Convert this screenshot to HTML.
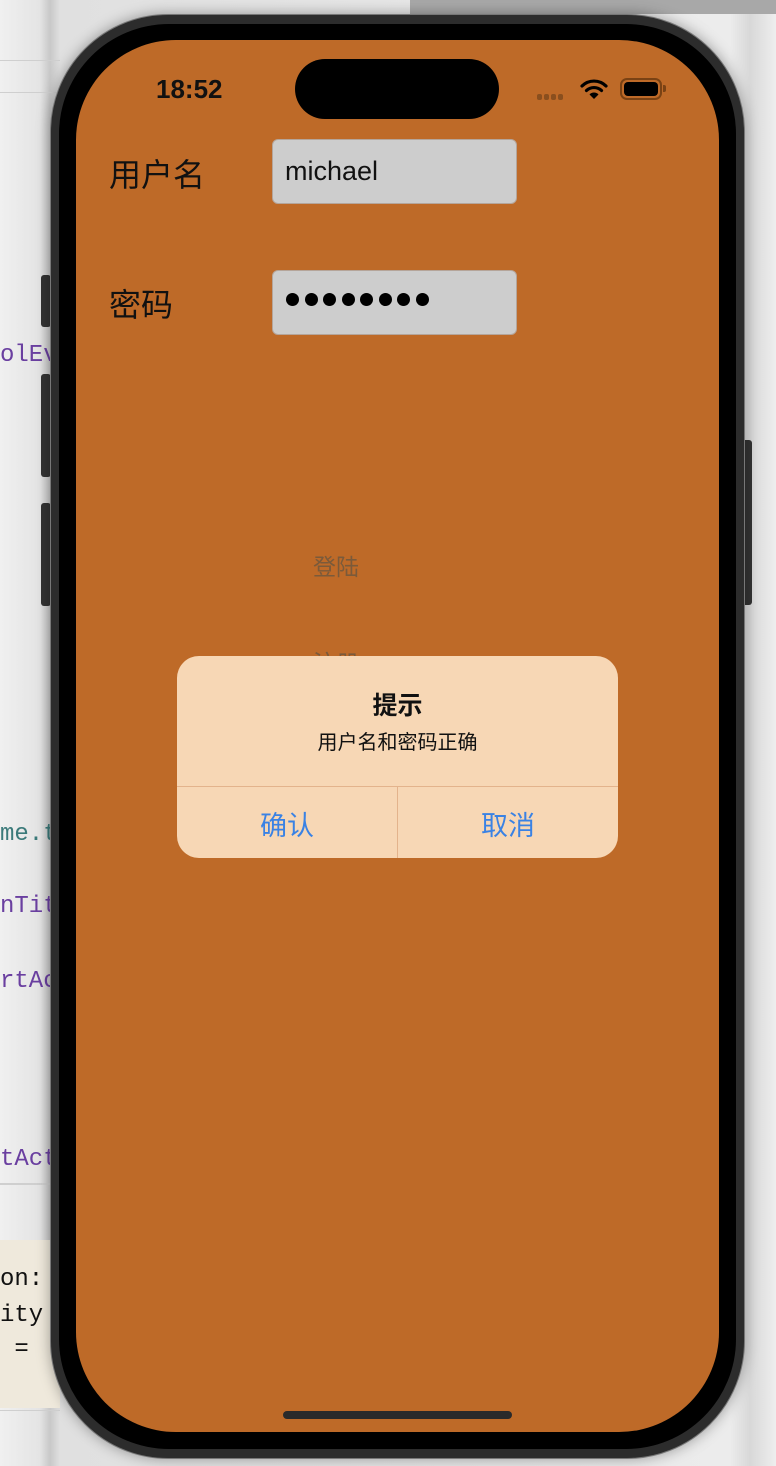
<!DOCTYPE html>
<html><head><meta charset="utf-8"><style>
*{margin:0;padding:0;box-sizing:border-box}
body{width:776px;height:1466px;overflow:hidden;position:relative;background:linear-gradient(90deg,#f0f0f0 0,#e4e4e4 40px,#c8c8c8 50px,#e0e0e0 60px,#ececec 730px,#d8d8d8 750px,#eeeeee 776px);font-family:"Liberation Sans","Noto Sans CJK SC",sans-serif}
.abs{position:absolute}
.code{position:absolute;left:0;font-family:"Liberation Mono","DejaVu Sans Mono",monospace;font-size:24px;color:#6a3fa0;line-height:28px}
.hl{position:absolute;left:0;width:60px;height:1px;background:#cfcfcf}
.btn{position:absolute;background:#333;border-radius:3px}
</style></head><body>
<div class="abs" style="left:410px;top:0;width:366px;height:14px;background:#a8a8a8"></div>
<div class="hl" style="top:60px"></div>
<div class="hl" style="top:92px"></div>
<div class="code" style="top:342px">olEv</div>
<div class="code" style="top:821px;color:#3b7a7a">me.t</div>
<div class="code" style="top:893px">nTit</div>
<div class="code" style="top:968px">rtAc</div>
<div class="code" style="top:1146px">tAct</div>
<div class="hl" style="top:1183px;height:2px"></div>
<div class="abs" style="left:0;top:1240px;width:60px;height:168px;background:#efe9dc"></div>
<div class="code" style="top:1266px;color:#111">on:</div>
<div class="code" style="top:1302px;color:#111">ity</div>
<div class="code" style="top:1336px;color:#111">&nbsp;=</div>
<div class="hl" style="top:1410px"></div>

<div class="btn" style="left:41px;top:275px;width:10px;height:52px"></div>
<div class="btn" style="left:41px;top:374px;width:10px;height:103px"></div>
<div class="btn" style="left:41px;top:503px;width:10px;height:103px"></div>
<div class="btn" style="left:742px;top:440px;width:10px;height:165px"></div>

<div class="abs" style="left:50px;top:14px;width:695px;height:1445px;border-radius:118px;background:#2c2c2c;box-shadow:0 0 14px rgba(0,0,0,.35);border:1px solid #777"></div>
<div class="abs" style="left:59px;top:24px;width:677px;height:1425px;border-radius:110px;background:#000"></div>
<div class="abs" style="left:76px;top:40px;width:643px;height:1392px;border-radius:100px;background:#be6a28;overflow:hidden">
  <div class="abs" style="left:80px;top:34px;font-size:26px;font-weight:bold;color:#111">18:52</div>
  <div class="abs" style="left:219px;top:19px;width:204px;height:60px;border-radius:30px;background:#000"></div>
  <div class="abs" style="left:461px;top:54px;width:27px;height:6px;display:flex;gap:2px">
    <span style="width:5px;height:6px;background:#8a4f1e;border-radius:2px"></span><span style="width:5px;height:6px;background:#8a4f1e;border-radius:2px"></span><span style="width:5px;height:6px;background:#8a4f1e;border-radius:2px"></span><span style="width:5px;height:6px;background:#8a4f1e;border-radius:2px"></span>
  </div>
  <svg class="abs" style="left:504px;top:38px" width="28" height="22" viewBox="0 0 28 22"><path d="M2 8 A17 17 0 0 1 26 8" fill="none" stroke="#000" stroke-width="3.2" stroke-linecap="round"/><path d="M6.5 12.5 A11 11 0 0 1 21.5 12.5" fill="none" stroke="#000" stroke-width="3.2" stroke-linecap="round"/><path d="M14 21 L9.5 16.5 A6 6 0 0 1 18.5 16.5 Z" fill="#000"/></svg>
  <div class="abs" style="left:544px;top:38px;width:42px;height:22px;border:2px solid #7a4214;border-radius:7px;padding:2px"><div style="width:100%;height:100%;background:#000;border-radius:4px"></div></div>
  <div class="abs" style="left:587px;top:45px;width:3px;height:7px;background:#7a4214;border-radius:0 2px 2px 0"></div>

  <div class="abs" style="left:33px;top:110px;font-size:32px;color:#111">用户名</div>
  <div class="abs" style="left:196px;top:99px;width:245px;height:65px;background:#cdcdcd;border-radius:6px;border:1px solid #b5a59a;font-size:27px;color:#111;padding:16px 0 0 12px">michael</div>
  <div class="abs" style="left:33px;top:240px;font-size:32px;color:#111">密码</div>
  <div class="abs" style="left:196px;top:230px;width:245px;height:65px;background:#cdcdcd;border-radius:6px;border:1px solid #b5a59a;color:#000;padding:22px 0 0 13px;display:flex;gap:5.5px">
    <span style="width:13px;height:13px;border-radius:50%;background:#000"></span><span style="width:13px;height:13px;border-radius:50%;background:#000"></span><span style="width:13px;height:13px;border-radius:50%;background:#000"></span><span style="width:13px;height:13px;border-radius:50%;background:#000"></span><span style="width:13px;height:13px;border-radius:50%;background:#000"></span><span style="width:13px;height:13px;border-radius:50%;background:#000"></span><span style="width:13px;height:13px;border-radius:50%;background:#000"></span><span style="width:13px;height:13px;border-radius:50%;background:#000"></span>
  </div>

  <div class="abs" style="left:237px;top:508px;font-size:23px;color:#7b5a3a">登陆</div>
  <div class="abs" style="left:237px;top:604px;font-size:23px;color:#7b5a3a">注册</div>

  <div class="abs" style="left:101px;top:616px;width:441px;height:202px;border-radius:22px;background:#f7d7b5;overflow:hidden">
    <div style="position:absolute;left:0;right:0;top:30px;text-align:center;font-size:25px;font-weight:bold;color:#111">提示</div>
    <div style="position:absolute;left:0;right:0;top:70px;text-align:center;font-size:20px;color:#111">用户名和密码正确</div>
    <div style="position:absolute;left:0;right:0;top:130px;height:1px;background:#e3b38c"></div>
    <div style="position:absolute;left:220px;top:130px;width:1px;height:72px;background:#e3b38c"></div>
    <div style="position:absolute;left:0;width:220px;top:148px;text-align:center;font-size:27px;color:#3a82e4">确认</div>
    <div style="position:absolute;left:221px;width:220px;top:148px;text-align:center;font-size:27px;color:#3a82e4">取消</div>
  </div>
  <div class="abs" style="left:207px;top:1371px;width:229px;height:8px;border-radius:4px;background:#2a2a2a"></div>
</div>
</body></html>
